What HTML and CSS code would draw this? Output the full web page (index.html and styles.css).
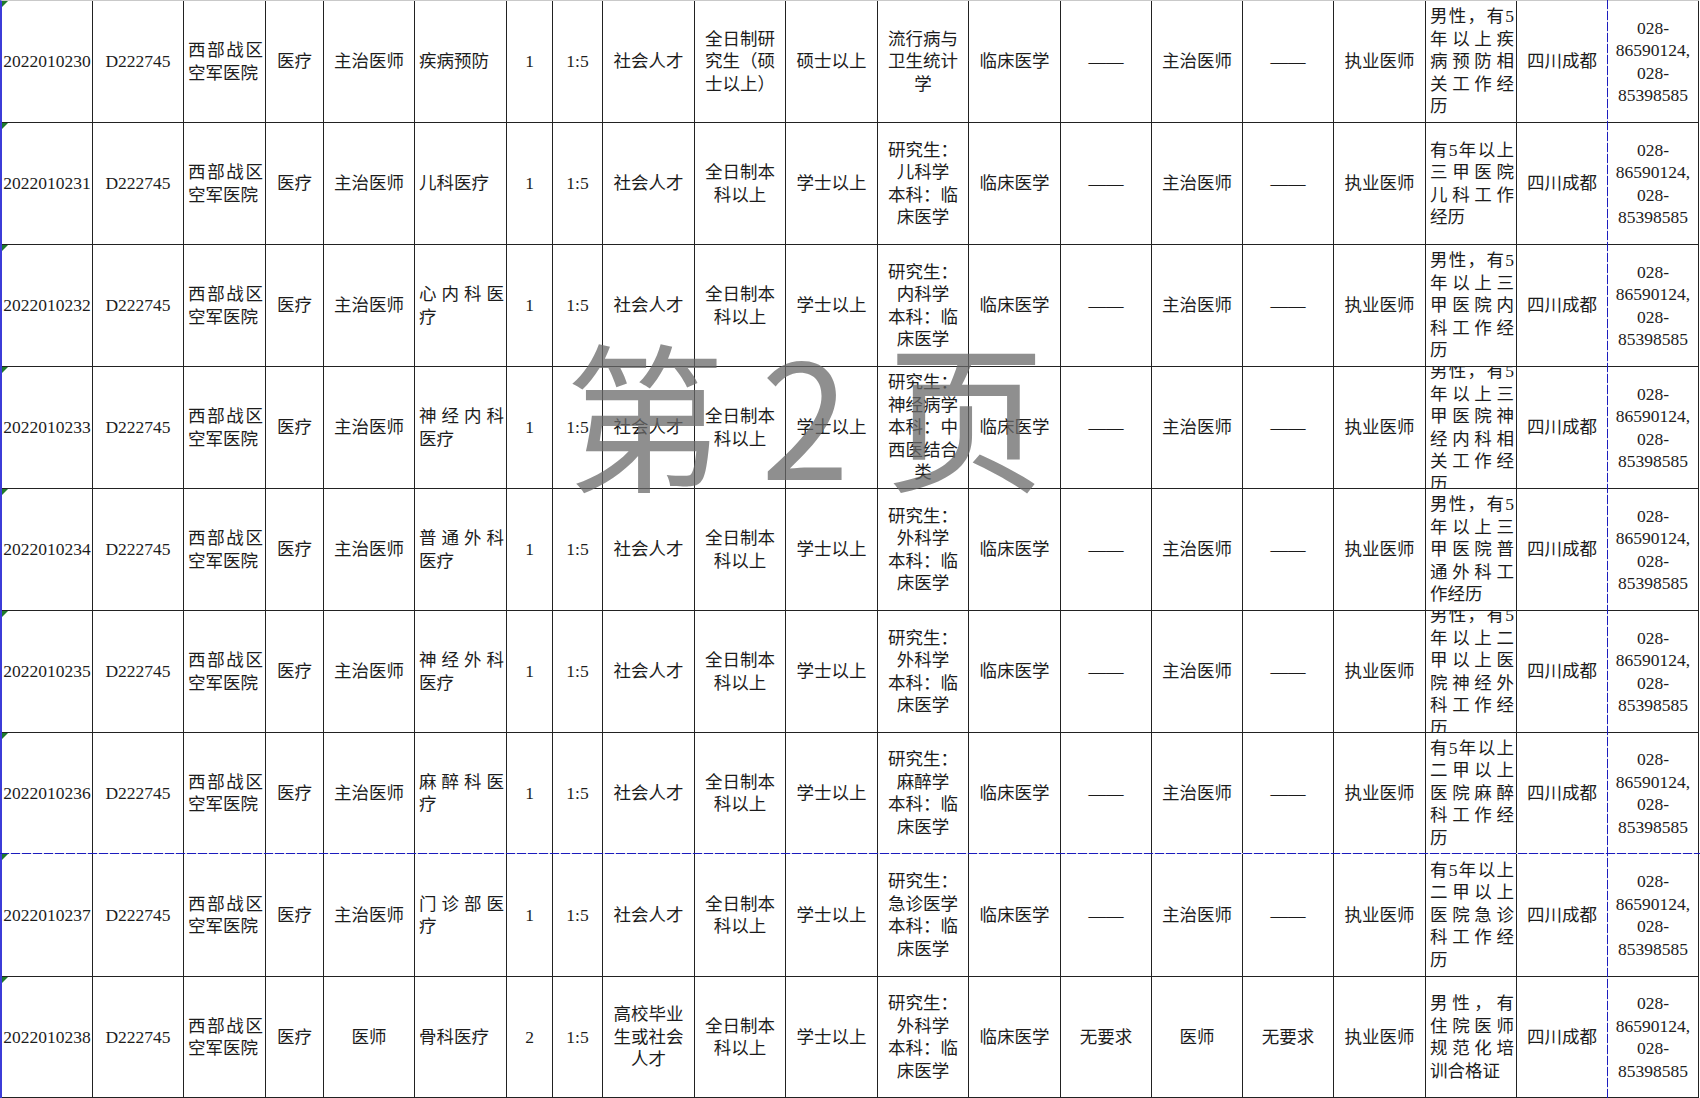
FILE: index.html
```html
<!DOCTYPE html>
<html lang="zh-CN">
<head>
<meta charset="utf-8">
<title>第2页</title>
<link rel="stylesheet" href="styles.css">
</head>
<body>
<div class="sheet">
  <!-- row 1 -->
  <div class="cell c id">2022010230</div>
  <div class="cell c">D222745</div>
  <div class="cell j"><span class="s">西部战区</span><span>空军医院</span></div>
  <div class="cell c">医疗</div>
  <div class="cell c">主治医师</div>
  <div class="cell j">疾病预防</div>
  <div class="cell c">1</div>
  <div class="cell c">1:5</div>
  <div class="cell c">社会人才</div>
  <div class="cell c"><span>全日制研</span><span>究生（硕</span><span>士以上）</span></div>
  <div class="cell c">硕士以上</div>
  <div class="cell c"><span>流行病与</span><span>卫生统计</span><span>学</span></div>
  <div class="cell c">临床医学</div>
  <div class="cell c">——</div>
  <div class="cell c">主治医师</div>
  <div class="cell c">——</div>
  <div class="cell c">执业医师</div>
  <div class="cell j"><span class="s">男性，有5</span><span class="s">年以上疾</span><span class="s">病预防相</span><span class="s">关工作经</span><span>历</span></div>
  <div class="cell c">四川成都</div>
  <div class="cell c"><span>028-</span><span>86590124,</span><span>028-</span><span>85398585</span></div>

  <!-- row 2 -->
  <div class="cell c id">2022010231</div>
  <div class="cell c">D222745</div>
  <div class="cell j"><span class="s">西部战区</span><span>空军医院</span></div>
  <div class="cell c">医疗</div>
  <div class="cell c">主治医师</div>
  <div class="cell j">儿科医疗</div>
  <div class="cell c">1</div>
  <div class="cell c">1:5</div>
  <div class="cell c">社会人才</div>
  <div class="cell c"><span>全日制本</span><span>科以上</span></div>
  <div class="cell c">学士以上</div>
  <div class="cell c"><span>研究生：</span><span>儿科学</span><span>本科：临</span><span>床医学</span></div>
  <div class="cell c">临床医学</div>
  <div class="cell c">——</div>
  <div class="cell c">主治医师</div>
  <div class="cell c">——</div>
  <div class="cell c">执业医师</div>
  <div class="cell j"><span class="s">有5年以上</span><span class="s">三甲医院</span><span class="s">儿科工作</span><span>经历</span></div>
  <div class="cell c">四川成都</div>
  <div class="cell c"><span>028-</span><span>86590124,</span><span>028-</span><span>85398585</span></div>

  <!-- row 3 -->
  <div class="cell c id">2022010232</div>
  <div class="cell c">D222745</div>
  <div class="cell j"><span class="s">西部战区</span><span>空军医院</span></div>
  <div class="cell c">医疗</div>
  <div class="cell c">主治医师</div>
  <div class="cell j"><span class="s">心内科医</span><span>疗</span></div>
  <div class="cell c">1</div>
  <div class="cell c">1:5</div>
  <div class="cell c">社会人才</div>
  <div class="cell c"><span>全日制本</span><span>科以上</span></div>
  <div class="cell c">学士以上</div>
  <div class="cell c"><span>研究生：</span><span>内科学</span><span>本科：临</span><span>床医学</span></div>
  <div class="cell c">临床医学</div>
  <div class="cell c">——</div>
  <div class="cell c">主治医师</div>
  <div class="cell c">——</div>
  <div class="cell c">执业医师</div>
  <div class="cell j"><span class="s">男性，有5</span><span class="s">年以上三</span><span class="s">甲医院内</span><span class="s">科工作经</span><span>历</span></div>
  <div class="cell c">四川成都</div>
  <div class="cell c"><span>028-</span><span>86590124,</span><span>028-</span><span>85398585</span></div>

  <!-- row 4 -->
  <div class="cell c id">2022010233</div>
  <div class="cell c">D222745</div>
  <div class="cell j"><span class="s">西部战区</span><span>空军医院</span></div>
  <div class="cell c">医疗</div>
  <div class="cell c">主治医师</div>
  <div class="cell j"><span class="s">神经内科</span><span>医疗</span></div>
  <div class="cell c">1</div>
  <div class="cell c">1:5</div>
  <div class="cell c">社会人才</div>
  <div class="cell c"><span>全日制本</span><span>科以上</span></div>
  <div class="cell c">学士以上</div>
  <div class="cell c"><span>研究生：</span><span>神经病学</span><span>本科：中</span><span>西医结合</span><span>类</span></div>
  <div class="cell c">临床医学</div>
  <div class="cell c">——</div>
  <div class="cell c">主治医师</div>
  <div class="cell c">——</div>
  <div class="cell c">执业医师</div>
  <div class="cell j"><span class="s">男性，有5</span><span class="s">年以上三</span><span class="s">甲医院神</span><span class="s">经内科相</span><span class="s">关工作经</span><span>历</span></div>
  <div class="cell c">四川成都</div>
  <div class="cell c"><span>028-</span><span>86590124,</span><span>028-</span><span>85398585</span></div>

  <!-- row 5 -->
  <div class="cell c id">2022010234</div>
  <div class="cell c">D222745</div>
  <div class="cell j"><span class="s">西部战区</span><span>空军医院</span></div>
  <div class="cell c">医疗</div>
  <div class="cell c">主治医师</div>
  <div class="cell j"><span class="s">普通外科</span><span>医疗</span></div>
  <div class="cell c">1</div>
  <div class="cell c">1:5</div>
  <div class="cell c">社会人才</div>
  <div class="cell c"><span>全日制本</span><span>科以上</span></div>
  <div class="cell c">学士以上</div>
  <div class="cell c"><span>研究生：</span><span>外科学</span><span>本科：临</span><span>床医学</span></div>
  <div class="cell c">临床医学</div>
  <div class="cell c">——</div>
  <div class="cell c">主治医师</div>
  <div class="cell c">——</div>
  <div class="cell c">执业医师</div>
  <div class="cell j"><span class="s">男性，有5</span><span class="s">年以上三</span><span class="s">甲医院普</span><span class="s">通外科工</span><span>作经历</span></div>
  <div class="cell c">四川成都</div>
  <div class="cell c"><span>028-</span><span>86590124,</span><span>028-</span><span>85398585</span></div>

  <!-- row 6 -->
  <div class="cell c id">2022010235</div>
  <div class="cell c">D222745</div>
  <div class="cell j"><span class="s">西部战区</span><span>空军医院</span></div>
  <div class="cell c">医疗</div>
  <div class="cell c">主治医师</div>
  <div class="cell j"><span class="s">神经外科</span><span>医疗</span></div>
  <div class="cell c">1</div>
  <div class="cell c">1:5</div>
  <div class="cell c">社会人才</div>
  <div class="cell c"><span>全日制本</span><span>科以上</span></div>
  <div class="cell c">学士以上</div>
  <div class="cell c"><span>研究生：</span><span>外科学</span><span>本科：临</span><span>床医学</span></div>
  <div class="cell c">临床医学</div>
  <div class="cell c">——</div>
  <div class="cell c">主治医师</div>
  <div class="cell c">——</div>
  <div class="cell c">执业医师</div>
  <div class="cell j"><span class="s">男性，有5</span><span class="s">年以上二</span><span class="s">甲以上医</span><span class="s">院神经外</span><span class="s">科工作经</span><span>历</span></div>
  <div class="cell c">四川成都</div>
  <div class="cell c"><span>028-</span><span>86590124,</span><span>028-</span><span>85398585</span></div>

  <!-- row 7 -->
  <div class="cell c id">2022010236</div>
  <div class="cell c">D222745</div>
  <div class="cell j"><span class="s">西部战区</span><span>空军医院</span></div>
  <div class="cell c">医疗</div>
  <div class="cell c">主治医师</div>
  <div class="cell j"><span class="s">麻醉科医</span><span>疗</span></div>
  <div class="cell c">1</div>
  <div class="cell c">1:5</div>
  <div class="cell c">社会人才</div>
  <div class="cell c"><span>全日制本</span><span>科以上</span></div>
  <div class="cell c">学士以上</div>
  <div class="cell c"><span>研究生：</span><span>麻醉学</span><span>本科：临</span><span>床医学</span></div>
  <div class="cell c">临床医学</div>
  <div class="cell c">——</div>
  <div class="cell c">主治医师</div>
  <div class="cell c">——</div>
  <div class="cell c">执业医师</div>
  <div class="cell j"><span class="s">有5年以上</span><span class="s">二甲以上</span><span class="s">医院麻醉</span><span class="s">科工作经</span><span>历</span></div>
  <div class="cell c">四川成都</div>
  <div class="cell c"><span>028-</span><span>86590124,</span><span>028-</span><span>85398585</span></div>

  <!-- row 8 -->
  <div class="cell c id">2022010237</div>
  <div class="cell c">D222745</div>
  <div class="cell j"><span class="s">西部战区</span><span>空军医院</span></div>
  <div class="cell c">医疗</div>
  <div class="cell c">主治医师</div>
  <div class="cell j"><span class="s">门诊部医</span><span>疗</span></div>
  <div class="cell c">1</div>
  <div class="cell c">1:5</div>
  <div class="cell c">社会人才</div>
  <div class="cell c"><span>全日制本</span><span>科以上</span></div>
  <div class="cell c">学士以上</div>
  <div class="cell c"><span>研究生：</span><span>急诊医学</span><span>本科：临</span><span>床医学</span></div>
  <div class="cell c">临床医学</div>
  <div class="cell c">——</div>
  <div class="cell c">主治医师</div>
  <div class="cell c">——</div>
  <div class="cell c">执业医师</div>
  <div class="cell j"><span class="s">有5年以上</span><span class="s">二甲以上</span><span class="s">医院急诊</span><span class="s">科工作经</span><span>历</span></div>
  <div class="cell c">四川成都</div>
  <div class="cell c"><span>028-</span><span>86590124,</span><span>028-</span><span>85398585</span></div>

  <!-- row 9 -->
  <div class="cell c id">2022010238</div>
  <div class="cell c">D222745</div>
  <div class="cell j"><span class="s">西部战区</span><span>空军医院</span></div>
  <div class="cell c">医疗</div>
  <div class="cell c">医师</div>
  <div class="cell j">骨科医疗</div>
  <div class="cell c">2</div>
  <div class="cell c">1:5</div>
  <div class="cell c"><span>高校毕业</span><span>生或社会</span><span>人才</span></div>
  <div class="cell c"><span>全日制本</span><span>科以上</span></div>
  <div class="cell c">学士以上</div>
  <div class="cell c"><span>研究生：</span><span>外科学</span><span>本科：临</span><span>床医学</span></div>
  <div class="cell c">临床医学</div>
  <div class="cell c">无要求</div>
  <div class="cell c">医师</div>
  <div class="cell c">无要求</div>
  <div class="cell c">执业医师</div>
  <div class="cell j"><span class="s">男性，有</span><span class="s">住院医师</span><span class="s">规范化培</span><span>训合格证</span></div>
  <div class="cell c">四川成都</div>
  <div class="cell c"><span>028-</span><span>86590124,</span><span>028-</span><span>85398585</span></div>
</div>

<div class="break-h"></div>
<div class="break-v"></div>
<div class="wm">第 2 页</div>
</body>
</html>
```

FILE: styles.css
```css
html, body {
  margin: 0;
  padding: 0;
  background: #fff;
}
body {
  position: relative;
  width: 1700px;
  height: 1098px;
  overflow: hidden;
  font-family: "Liberation Serif", "Noto Sans CJK SC", serif;
  font-size: 17.5px;
  line-height: 22.5px;
  color: #1c1c1c;
}
.sheet {
  display: grid;
  grid-template-columns: 91px 91px 82px 58px 91px 92px 46px 50px 92px 91px 92px 91px 92px 91px 91px 91px 92px 91px 91px 91px;
  grid-template-rows: 122px 122px 122px 122px 122px 122px 121px 123px 121px;
  width: max-content;
  border-top: 1px solid #c9c9c9;
  border-left: 2px solid #3c3cd8;
}
.cell {
  box-sizing: border-box;
  border-right: 1px solid #222;
  border-bottom: 1px solid #222;
  display: flex;
  flex-direction: column;
  justify-content: center;
  overflow: hidden;
  padding: 0 3px;
  white-space: nowrap;
}
.c {
  text-align: center;
  padding: 0 1px;
}
.j {
  text-align: left;
  padding: 0 2px 0 4px;
}
.s {
  text-align: justify;
  text-align-last: justify;
}
.id {
  position: relative;
}
.id::before {
  content: "";
  position: absolute;
  left: 0;
  top: 0;
  width: 0;
  height: 0;
  border-top: 6px solid #1f7a2c;
  border-right: 6px solid transparent;
}
.break-h {
  position: absolute;
  left: 0;
  top: 853px;
  width: 1700px;
  height: 1px;
  background: repeating-linear-gradient(90deg, #1c1cbe 0 9px, #d8d8f0 9px 11px);
}
.break-v {
  position: absolute;
  left: 1607px;
  top: 0;
  width: 1px;
  height: 1098px;
  background: repeating-linear-gradient(180deg, #1c1cbe 0 9px, #d8d8f0 9px 11px);
}
.wm {
  position: absolute;
  left: 565px;
  top: 330px;
  font-family: "Noto Sans CJK SC", sans-serif;
  font-size: 160px;
  line-height: 1;
  color: rgba(105, 105, 105, 0.75);
  white-space: pre;
  pointer-events: none;
}
```
